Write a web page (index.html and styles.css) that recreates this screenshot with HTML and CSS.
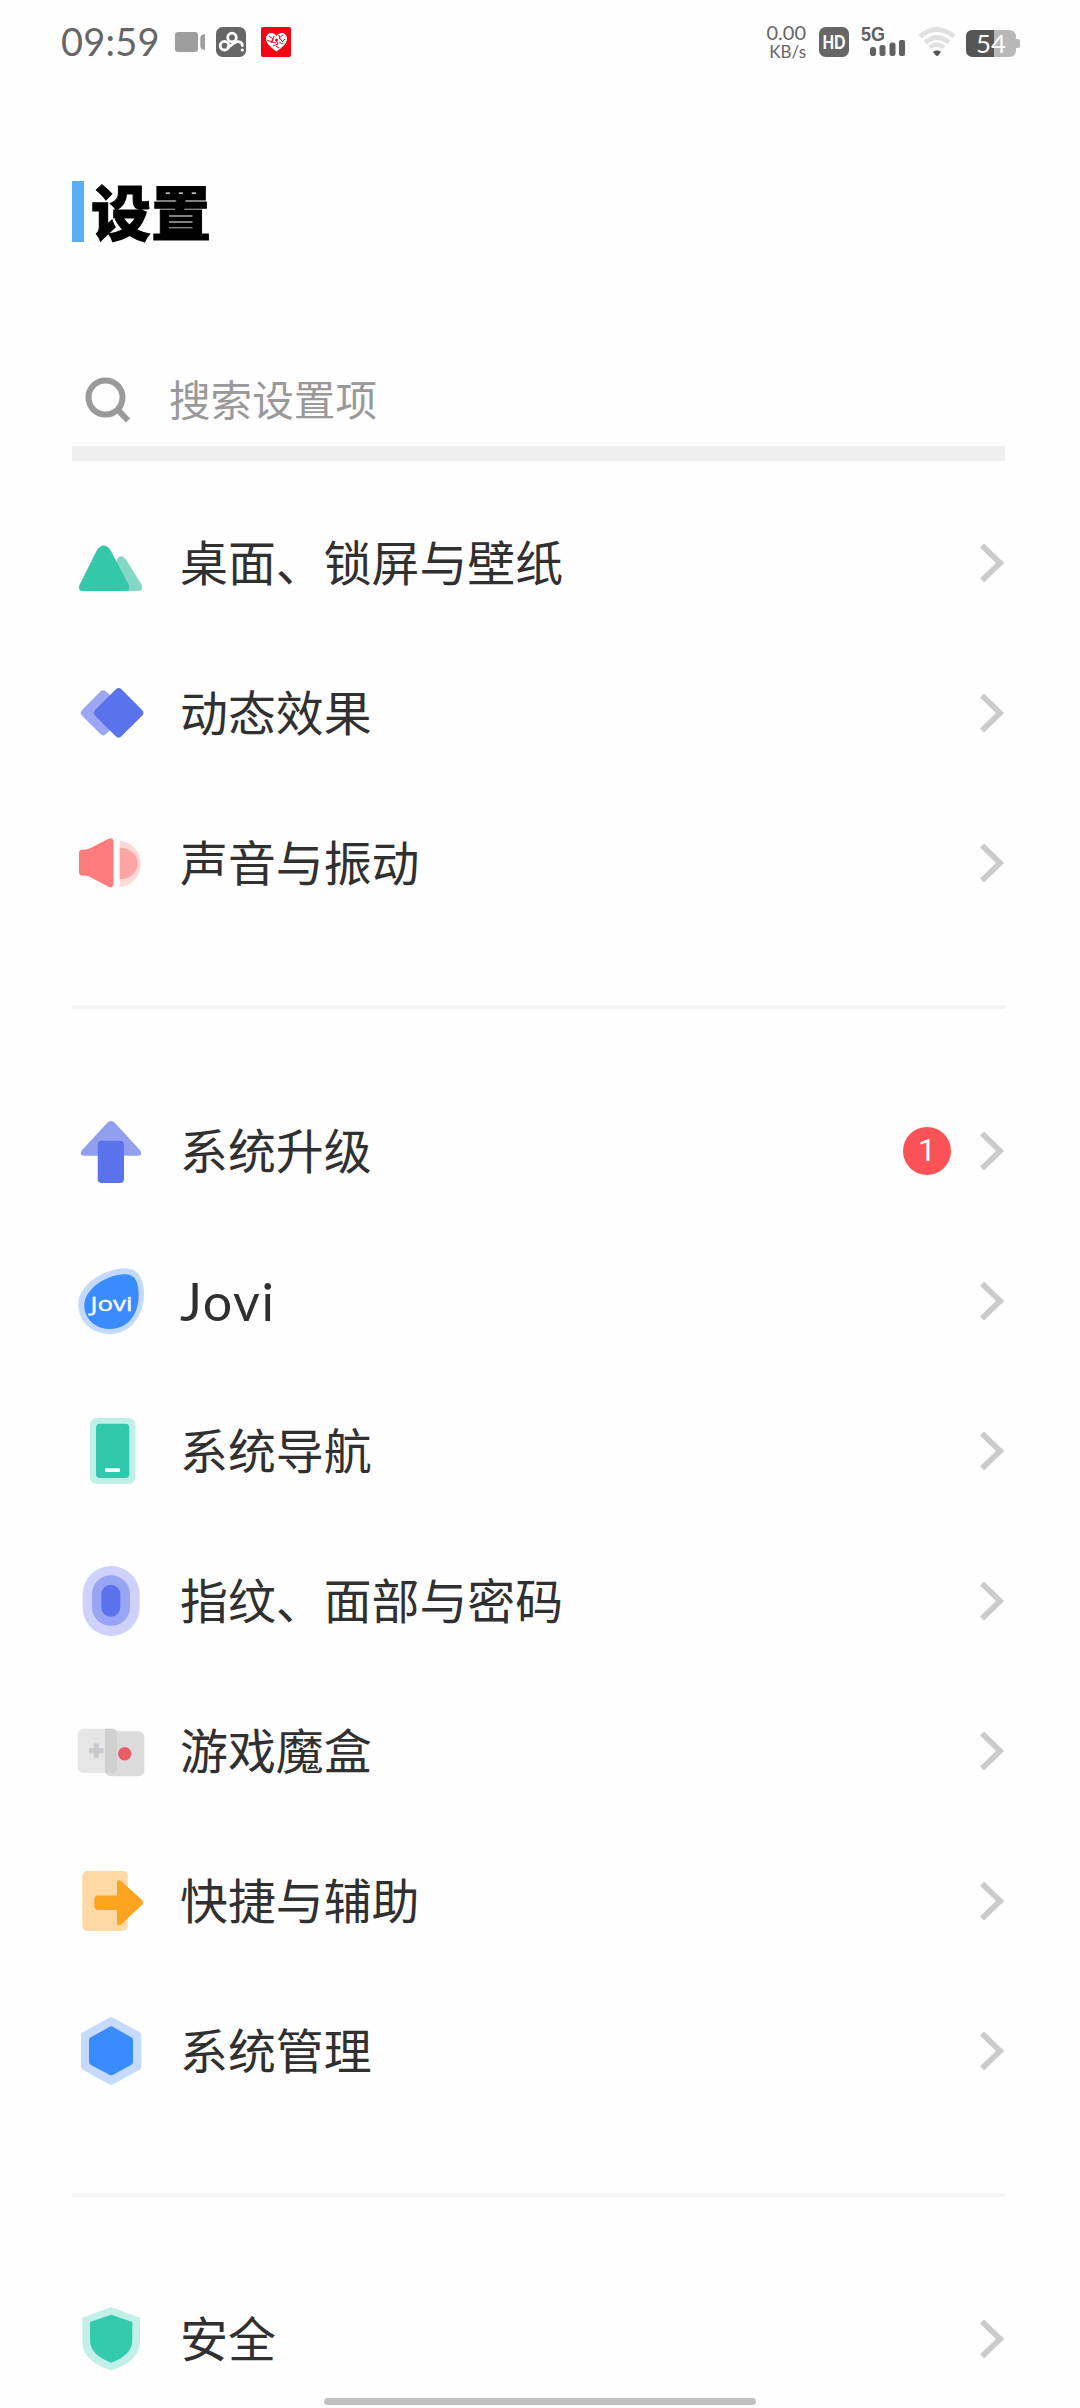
FILE: index.html
```html
<!DOCTYPE html>
<html lang="zh-CN">
<head>
<meta charset="utf-8">
<title>设置</title>
<link rel="stylesheet" href="styles.css">
</head>
<body>
<svg class="defs" width="0" height="0">
  <symbol id="chevron" viewBox="0 0 25 40"><path d="M2 2.500 20 20 2 37.500" fill="none" stroke="#cbcbcb" stroke-width="5.800"/></symbol>
</svg>
<div class="screen">
  <header class="status">
    <span class="clock">09:59</span>
    <svg class="video" width="30" height="20" viewBox="0 0 30 20" fill="#9e9e9e"><rect width="23" height="20" rx="3"/><path d="M25.300 5.500Q25.500 3 28 2.500L30 2V18L28 17.500Q25.500 17 25.300 14.500Z"/></svg>
    <svg class="pan" width="30" height="30" viewBox="0 0 30 30"><rect width="30" height="30" rx="6.500" fill="#666"/><g fill="none" stroke="#fff" stroke-width="2.800"><circle cx="8.500" cy="18.700" r="4.300"/><circle cx="16" cy="10.500" r="4.300"/><path d="M12 20.500Q15 18.500 17.500 16.500C21.500 13 26.500 15 26.300 18.500" stroke-linecap="round"/></g><circle cx="26.300" cy="23" r="1.600" fill="#fff"/></svg>
    <svg class="heart" width="30" height="30" viewBox="0 0 30 30"><rect width="30" height="30" rx="2" fill="#f30513"/><path d="M15.500 24.500C9 20 5 16 5 11.500 5 5.500 12.500 4 15.500 9 18.500 4 26 5.500 26 11.500 26 16 22 20 15.500 24.500Z" fill="#fff"/><path d="M8 9l4 3-2 4M13 9l-2 6 4 1M22 8l-4 3 3 3M15 13l2 4-5 2M18 15l4 2M15 19l3 2M6 13l5 2M24 12l-3 3M18 8l1 4" fill="none" stroke="#f30513" stroke-width="1"/><circle cx="15.500" cy="13" r="1.500" fill="#f30513"/></svg>
    <div class="speed"><span class="rate">0.00</span><span class="unit">KB/s</span></div>
    <svg class="hd" width="30" height="30" viewBox="0 0 30 30"><rect width="30" height="30" rx="6.500" fill="#666"/><text x="3.500" y="21.500" textLength="23" lengthAdjust="spacingAndGlyphs">HD</text></svg>
    <svg class="cell" width="46" height="32" viewBox="0 0 46 32" fill="#616161"><text x="0" y="16" textLength="24" lengthAdjust="spacingAndGlyphs">5G</text><rect x="9" y="22" width="6" height="9" rx="2.500"/><rect x="18.500" y="20" width="6" height="11" rx="2.500"/><rect x="28.500" y="17.500" width="6" height="13.500" rx="2.500"/><rect x="38" y="15" width="6" height="16" rx="2"/></svg>
    <svg class="wifi" width="38" height="30" viewBox="0 0 38 30"><g fill="none" stroke="#e0e0e0" stroke-width="4.600"><path d="M2 9.500Q19-4.500 36 9.500"/><path d="M7.200 15.500Q19 5.500 30.800 15.500"/><path d="M11.800 20.500Q19 15 26.200 20.500"/></g><path d="M15 24.800Q19 22 23 24.800L20.500 28.300Q19 29.700 17.500 28.300Z" fill="#555"/></svg>
    <svg class="battery" width="54" height="27" viewBox="0 0 54 27"><path d="M7 0H43Q50 0 50 7V9H52Q54 9 54 11V16Q54 18 52 18H50V20Q50 27 43 27H7Q0 27 0 20V7Q0 0 7 0Z" fill="#b8b8b8"/><path d="M7 0H28V27H7Q0 27 0 20V7Q0 0 7 0Z" fill="#555"/><text x="10" y="22.500" textLength="30" lengthAdjust="spacingAndGlyphs">54</text></svg>
  </header>
  <main>
    <h1 class="title"><span>设置</span></h1>
    <div class="search">
      <svg width="48" height="48" viewBox="0 0 48 48" fill="none" stroke="#9a9a9a" stroke-width="6"><circle cx="21.500" cy="22.500" r="17"/><path d="M33 34 44 45.500"/></svg>
      <span>搜索设置项</span>
    </div>

    <ul class="group">
      <li class="row">
        <svg class="icon" viewBox="0 1.500 78 78"><path d="M44.800 37Q49.300 30 54 37L69.500 62Q72 68.600 66 68.600H40Z" fill="#83d8c5"/><path d="M24.700 28Q31.700 18 38.700 28L56.500 62Q59 68.600 53 68.600H11Q5 68.600 7.700 62Z" fill="#32c8a9"/></svg>
        <span class="label">桌面、锁屏与壁纸</span><svg class="chev"><use href="#chevron"/></svg>
      </li>
      <li class="row">
        <svg class="icon" viewBox="0 0 78 78"><rect x="14.300" y="21.800" width="34" height="34" rx="4" transform="rotate(45 31.300 38.800)" fill="#9ba6f5"/><rect x="28" y="20.200" width="37.200" height="37.200" rx="4" transform="rotate(45 46.600 38.800)" fill="#5b72ed"/></svg>
        <span class="label">动态效果</span><svg class="chev"><use href="#chevron"/></svg>
      </li>
      <li class="row">
        <svg class="icon" viewBox="0 0 78 78"><path d="M47.700 16.700A22.700 23.200 0 0 1 47.700 63Z" fill="#ffd8d8"/><path d="M47.700 23.700A18 15.800 0 0 1 47.700 55.300Z" fill="#ffa3a4"/><path d="M10.500 25.500Q14.500 26 17.500 24.500L36.500 14.800Q41.500 13 41.500 18V59.500Q41.500 64.500 36.500 62.800L17.500 52.800Q14.500 51.300 10.500 51.700 7 51.700 7 48V29Q7 25.500 10.500 25.500Z" fill="#ff7c7e"/></svg>
        <span class="label">声音与振动</span><svg class="chev"><use href="#chevron"/></svg>
      </li>
    </ul>

    <ul class="group">
      <li class="row">
        <svg class="icon" viewBox="0 0 78 78"><path d="M35.500 10.500Q39 7.300 42.500 10.500L68.300 38.500Q71 43.700 66 43.700H12Q7 43.700 9.700 38.500Z" fill="#929fee"/><rect x="25.700" y="28.700" width="26.300" height="42.300" rx="4" fill="#5b72ed"/></svg>
        <span class="label">系统升级</span><span class="badge">1</span><svg class="chev"><use href="#chevron"/></svg>
      </li>
      <li class="row">
        <svg class="icon jovi" viewBox="0 0 78 78"><path d="M53 6.300C66 6.300 72 16 72 32 72 54 58 72 38 72 20 72 6.300 60 6.300 42 6.300 23 32 6.300 53 6.300Z" fill="#c3dafd"/><path d="M53 12.300C63 12.300 66.700 20 66.700 33 66.700 53 55 67 38 67 23 67 12.300 57 12.300 43 12.300 27 35 12.300 53 12.300Z" fill="#3a8bfd"/><text x="18.500" y="49" textLength="42" lengthAdjust="spacingAndGlyphs">Jovi</text></svg>
        <span class="label latin">Jovi</span><svg class="chev"><use href="#chevron"/></svg>
      </li>
      <li class="row">
        <svg class="icon" viewBox="0 0 78 78"><rect x="18" y="5.700" width="45.300" height="66.300" rx="7" fill="#c0efe5"/><rect x="24" y="11.700" width="33.300" height="54.300" rx="4" fill="#32c8ae"/><rect x="33" y="56.300" width="15" height="3.700" rx="1" fill="#fff"/></svg>
        <span class="label">系统导航</span><svg class="chev"><use href="#chevron"/></svg>
      </li>
      <li class="row">
        <svg class="icon" viewBox="0 0 78 78"><rect x="10.700" y="4" width="57" height="70" rx="28.500" fill="#ced2fb"/><rect x="20" y="13.300" width="38" height="50.700" rx="19" fill="#98a4f4"/><rect x="29.300" y="22.700" width="19" height="32" rx="9.500" fill="#5b72ed"/></svg>
        <span class="label">指纹、面部与密码</span><svg class="chev"><use href="#chevron"/></svg>
      </li>
      <li class="row">
        <svg class="icon" viewBox="0 0 78 78"><rect x="5.700" y="16.700" width="39.300" height="44.300" rx="6" fill="#e6e6e6"/><rect x="33" y="19.300" width="39.300" height="45" rx="6" fill="#dcdbdc"/><path d="M33 25V16.700H40Q45 16.700 45 21.700V56Q45 61 40 61H33Z" fill="#d0d0d1"/><path d="M24.300 31.500V46M17 38.700H31.600" stroke="#c8c8cd" stroke-width="5"/><circle cx="52.700" cy="41.700" r="6.700" fill="#e95d68"/></svg>
        <span class="label">游戏魔盒</span><svg class="chev"><use href="#chevron"/></svg>
      </li>
      <li class="row">
        <svg class="icon" viewBox="0 0 78 78"><rect x="10.300" y="9" width="45.400" height="60" rx="5" fill="#fed9a3"/><path d="M25 33.500H45V20Q46 16.500 49 19L70 38Q72 40.500 70 43L49 62.500Q46 65 45 61.500V48H25Q22.300 47 22.300 43V38Q22.300 34 25 33.500Z" fill="#fca420"/></svg>
        <span class="label">快捷与辅助</span><svg class="chev"><use href="#chevron"/></svg>
      </li>
      <li class="row">
        <svg class="icon" viewBox="0 0 78 78"><path d="M39.200 9.300 65.300 23.500V54.500L39.200 68.700 13 54.500V23.500Z" fill="#c4dbfe" stroke="#c4dbfe" stroke-width="8" stroke-linejoin="round"/><path d="M39.200 17.300 58 28V50L39.200 60.300 20 50V28Z" fill="#3a8bfd" stroke="#3a8bfd" stroke-width="6" stroke-linejoin="round"/></svg>
        <span class="label">系统管理</span><svg class="chev"><use href="#chevron"/></svg>
      </li>
    </ul>

    <ul class="group">
      <li class="row">
        <svg class="icon" viewBox="0 0 78 78"><path d="M39.200 7 68 17.700V41C68 56 56 65 39.200 70.300 22 65 10.300 56 10.300 41V17.700Z" fill="#c2efe7"/><path d="M39.200 14.700 60.300 22V40C60.300 51 52 58 39.200 62.700 26.500 58 18 51 18 40V22Z" fill="#34caae"/></svg>
        <span class="label">安全</span><svg class="chev"><use href="#chevron"/></svg>
      </li>
    </ul>
  </main>
  <div class="home-bar"></div>
</div>
</body>
</html>
```
FILE: styles.css
```css
* { box-sizing: border-box; }

body {
  margin: 0;
  background: #fefefe;
  color: #303030;
  font-family: "Noto Sans CJK SC", sans-serif;
}

.defs { position: absolute; }
svg { display: block; flex: none; overflow: visible; }

.screen {
  position: relative;
  width: 1080px;
  height: 2408px;
  overflow: hidden;
}

/* status bar */
.status {
  display: flex;
  align-items: center;
  height: 84px;
  padding: 0 60px 0 61px;
  color: #666;
  font-family: Lato, sans-serif;
}

.clock {
  width: 114px;
  padding-bottom: 3px;
  font-size: 38px;
  line-height: 44px;
  letter-spacing: 0.2px;
  white-space: nowrap;
}

.pan { margin-left: 11px; }
.heart { margin-left: 15px; }

.speed {
  display: flex;
  flex-direction: column;
  align-items: flex-end;
  margin-left: auto;
  line-height: 20px;
}

.rate { font-size: 20px; }
.unit { font-size: 17px; }
.hd { margin-left: 13px; }
.hd text { font: 900 18px Lato, sans-serif; fill: #fff; }
.cell { margin: 0 0 2px 12px; }
.cell text { font: 700 20px "Liberation Sans", sans-serif; }
.wifi { margin-left: 11px; }
.battery { margin: 3px 0 0 10px; }
.battery text { font: 400 25px Lato, sans-serif; fill: #fff; }

main { padding: 97px 75px 0 72px; }

.title {
  display: flex;
  align-items: center;
  height: 61px;
  margin: 0;
  padding-left: 7px;
  border-left: 12px solid #5aaef5;
  color: #000;
  font-size: 60px;
  font-weight: 900;
  line-height: 60px;
  -webkit-text-stroke: 1px #000;
}

.title span { padding-bottom: 4px; }

.search {
  display: flex;
  align-items: center;
  gap: 37px;
  height: 125px;
  margin-top: 94px;
  padding: 16px 0 0 12px;
  border-bottom: 15px solid #efefef;
  color: #999;
  font-size: 41.600px;
  line-height: 60px;
}

.search span { padding-bottom: 2px; }

.group {
  margin: 0;
  padding: 0;
  list-style: none;
}

.search + .group { margin-top: 27px; }

.group + .group {
  margin-top: 67px;
  padding-top: 67px;
  border-top: 4px solid #f5f5f5;
}

.row {
  display: flex;
  align-items: center;
  height: 150px;
}

.icon { width: 78px; height: 78px; }
.jovi text { font: 400 20px "Open Sans", sans-serif; fill: #fff; stroke: #fff; stroke-width: 0.4px; }

.label {
  flex: 1;
  margin-left: 30px;
  padding-bottom: 6px;
  font-size: 47.900px;
  line-height: 70px;
}

.latin {
  padding-bottom: 0;
  font-family: Lato, sans-serif;
  font-size: 52px;
  letter-spacing: 1.600px;
}

.badge {
  width: 48px;
  height: 48px;
  margin-right: 29px;
  border-radius: 50%;
  background: #fa5256;
  color: #fff;
  font-family: Roboto, sans-serif;
  font-size: 32px;
  line-height: 47px;
  text-align: center;
}

.chev { width: 25px; height: 40px; }

.home-bar {
  position: absolute;
  left: 324px;
  bottom: 3px;
  width: 432px;
  height: 7px;
  border-radius: 4px;
  background: #c1c1c1;
}
```
